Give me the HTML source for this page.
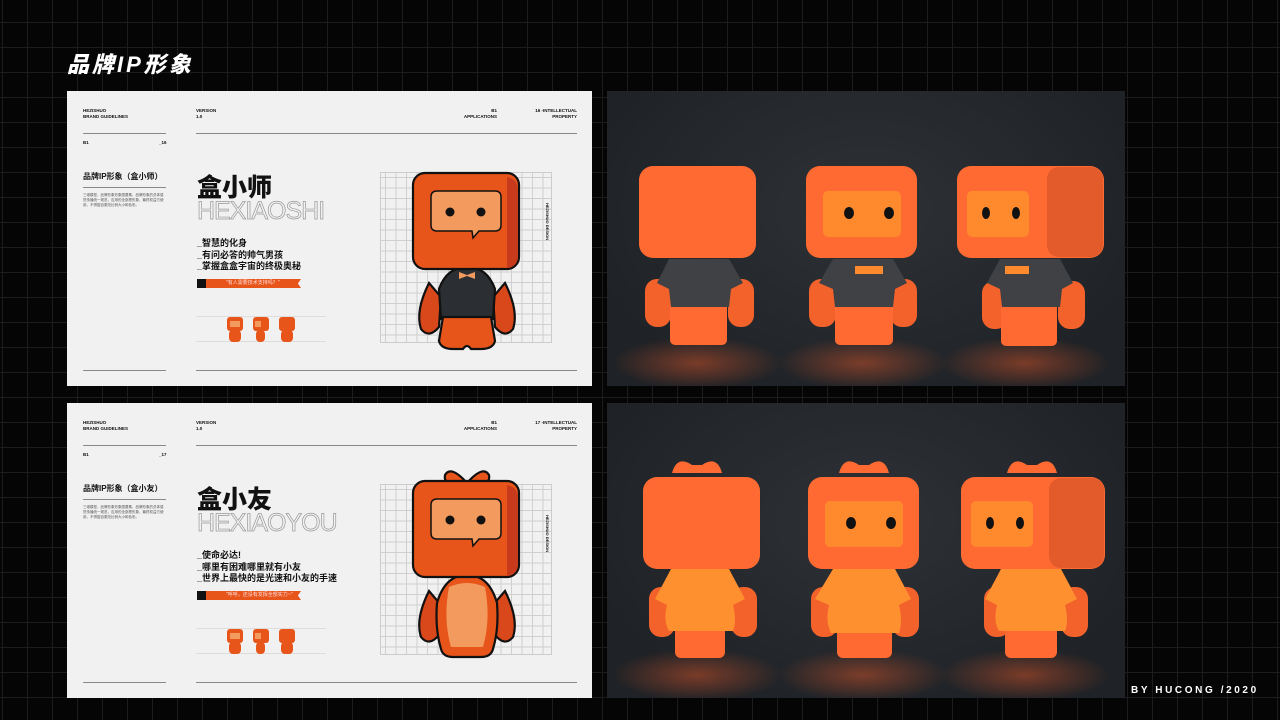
<!DOCTYPE html>
<html><head><meta charset="utf-8"><style>
*{margin:0;padding:0;box-sizing:border-box}
body{width:1280px;height:720px;overflow:hidden;background:#050505;position:relative;font-family:"Liberation Sans","Noto Sans CJK SC",sans-serif;
background-image:linear-gradient(#1c1c1c 1px,transparent 1px),linear-gradient(90deg,#1c1c1c 1px,transparent 1px);background-size:25px 25px;background-position:2px 22px}
.t{position:absolute;left:67px;top:47px;color:#fff;font-size:22px;font-weight:900;font-style:italic;letter-spacing:3px}
.p{position:absolute;left:67px;width:525px;height:295px;background:#f1f1f1;color:#111}
.d{position:absolute;left:607px;width:518px;height:295px;background:radial-gradient(ellipse at 50% 40%,#2e3236,#1f2226 80%)}
.s{position:absolute;font-size:4.5px;font-weight:700;line-height:6px}
.ln{position:absolute;height:1px;background:#888}
.by{position:absolute;left:1131px;top:685px;color:#fff;font-size:10px;font-weight:700;letter-spacing:2.6px}
.big{position:absolute;left:130px;font-size:25px;font-weight:900}
.en{position:absolute;left:130px;font-size:25px;color:transparent;-webkit-text-stroke:0.7px #999;letter-spacing:-1px}
.bl{position:absolute;left:130px;font-size:9px;line-height:11.5px;font-weight:600}
.tag{position:absolute;left:130px;width:104px;height:9px;background:#e8551a;border-left:9px solid #111;color:#fdd;font-size:5px;line-height:9px;padding-left:20px;clip-path:polygon(0 0,100% 0,97% 50%,100% 100%,0 100%)}
.sub{position:absolute;left:16px;font-size:8px;font-weight:600}
</style></head><body>
<div class="t">品牌IP形象</div>

<!-- panel 1 -->
<div class="p" style="top:91px">
 <div class="s" style="left:16px;top:17px">HEZISHUO<br>BRAND GUIDELINES</div>
 <div class="s" style="left:129px;top:17px">VERSION<br>1.0</div>
 <div class="s" style="left:390px;top:17px;text-align:right;width:40px">B1<br>APPLICATIONS</div>
 <div class="s" style="left:450px;top:17px;text-align:right;width:60px">16 -INTELLECTUAL<br>PROPERTY</div>
 <div class="ln" style="left:16px;top:42px;width:83px"></div>
 <div class="ln" style="left:129px;top:42px;width:381px"></div>
 <div class="s" style="left:16px;top:49px">B1</div><div class="s" style="left:92px;top:49px">_16</div>
 <div class="sub" style="top:80px">品牌IP形象（盒小师）</div>
 <div class="ln" style="left:16px;top:96px;width:83px"></div>
 <div class="s" style="left:16px;top:102px;font-size:3.5px;line-height:5px;width:83px;font-weight:400;color:#555">三维模型，品牌形象形象图要素，品牌形象的总体感觉传播统一规范，应用的全部是形象，最终权益方使用，不得擅自更改比例大小和色彩。</div>
 <div class="big" style="top:77px">盒小师</div>
 <div class="en" style="top:106px">HEXIAOSHI</div>
 <div class="bl" style="top:147px">_智慧的化身<br>_有问必答的帅气男孩<br>_掌握盒盒宇宙的终极奥秘</div>
 <div class="tag" style="top:188px">"有人需要技术支持吗？"</div>
 <div class="ln" style="left:129px;top:225px;width:130px;background:#ddd"></div>
 <div class="ln" style="left:129px;top:250px;width:130px;background:#ddd"></div>
 <svg style="position:absolute;left:158px;top:222px" width="75" height="32">
  <g fill="#e8551a"><rect x="2" y="4" width="16" height="14" rx="3"/><rect x="4" y="17" width="12" height="12" rx="4"/><rect x="28" y="4" width="16" height="14" rx="3"/><rect x="31" y="17" width="9" height="12" rx="4"/><rect x="54" y="4" width="16" height="14" rx="3"/><rect x="56" y="17" width="12" height="12" rx="4"/></g>
  <g fill="#f39a5e"><rect x="5" y="8" width="10" height="6"/><rect x="30" y="8" width="6" height="6"/></g>
 </svg>
 <div style="position:absolute;left:313px;top:81px;width:172px;height:171px;border:1px solid #ccc;background-image:linear-gradient(#d0d0d0 1px,transparent 1px),linear-gradient(90deg,#d0d0d0 1px,transparent 1px);background-size:10.5px 10.5px;background-position:4px 4px"></div>
 <div style="position:absolute;left:478px;top:112px;font-size:4px;font-weight:700;writing-mode:vertical-rl">HEZISHUO DESIGN</div>
 <svg style="position:absolute;left:340px;top:80px" width="120" height="180" viewBox="0 0 120 180">
  <g stroke="#111" stroke-width="2.2">
   <path d="M22 112 Q8 140 14 158 Q22 168 32 156 L34 126Z" fill="#d9481a"/>
   <path d="M98 112 Q112 140 106 158 Q98 168 88 156 L86 126Z" fill="#d9481a"/>
   <path d="M32 118 Q40 96 60 96 Q80 96 88 118 L86 148 L34 148Z" fill="#2b2e32"/>
   <path d="M36 146 L84 146 L88 170 Q86 178 74 178 L64 178 Q60 172 56 178 L46 178 Q34 178 32 170Z" fill="#e8551a"/>
   <rect x="6" y="2" width="106" height="96" rx="12" fill="#e8551a"/>
   <path d="M24 26 Q24 20 30 20 L88 20 Q94 20 94 26 L94 54 Q94 60 88 60 L72 60 L66 67 L65 60 L30 60 Q24 60 24 54Z" fill="#f39a5e" stroke-width="1.5"/>
  </g>
  <path d="M100 6 Q111 8 111 20 L111 86 Q110 96 100 97Z" fill="#c83a1c"/>
  <circle cx="43" cy="41" r="4.5" fill="#111"/><circle cx="74" cy="41" r="4.5" fill="#111"/>
  <path d="M52 101 L60 104 L68 101 L68 108 L60 105 L52 108Z" fill="#f39a5e"/>
 </svg>
 <div class="ln" style="left:16px;top:279px;width:83px"></div>
 <div class="ln" style="left:129px;top:279px;width:381px"></div>
</div>

<!-- panel 2 -->
<div class="p" style="top:403px">
 <div class="s" style="left:16px;top:17px">HEZISHUO<br>BRAND GUIDELINES</div>
 <div class="s" style="left:129px;top:17px">VERSION<br>1.0</div>
 <div class="s" style="left:390px;top:17px;text-align:right;width:40px">B1<br>APPLICATIONS</div>
 <div class="s" style="left:450px;top:17px;text-align:right;width:60px">17 -INTELLECTUAL<br>PROPERTY</div>
 <div class="ln" style="left:16px;top:42px;width:83px"></div>
 <div class="ln" style="left:129px;top:42px;width:381px"></div>
 <div class="s" style="left:16px;top:49px">B1</div><div class="s" style="left:92px;top:49px">_17</div>
 <div class="sub" style="top:80px">品牌IP形象（盒小友）</div>
 <div class="ln" style="left:16px;top:96px;width:83px"></div>
 <div class="s" style="left:16px;top:102px;font-size:3.5px;line-height:5px;width:83px;font-weight:400;color:#555">三维模型，品牌形象形象图要素，品牌形象的总体感觉传播统一规范，应用的全部是形象，最终权益方使用，不得擅自更改比例大小和色彩。</div>
 <div class="big" style="top:77px">盒小友</div>
 <div class="en" style="top:106px">HEXIAOYOU</div>
 <div class="bl" style="top:147px">_使命必达!<br>_哪里有困难哪里就有小友<br>_世界上最快的是光速和小友的手速</div>
 <div class="tag" style="top:188px">"呼呼，还没有发挥全部实力~"</div>
 <div class="ln" style="left:129px;top:225px;width:130px;background:#ddd"></div>
 <div class="ln" style="left:129px;top:250px;width:130px;background:#ddd"></div>
 <svg style="position:absolute;left:158px;top:222px" width="75" height="32">
  <g fill="#e8551a"><rect x="2" y="4" width="16" height="14" rx="3"/><rect x="4" y="17" width="12" height="12" rx="4"/><rect x="28" y="4" width="16" height="14" rx="3"/><rect x="31" y="17" width="9" height="12" rx="4"/><rect x="54" y="4" width="16" height="14" rx="3"/><rect x="56" y="17" width="12" height="12" rx="4"/></g>
  <g fill="#f39a5e"><rect x="5" y="8" width="10" height="6"/><rect x="30" y="8" width="6" height="6"/></g>
 </svg>
 <div style="position:absolute;left:313px;top:81px;width:172px;height:171px;border:1px solid #ccc;background-image:linear-gradient(#d0d0d0 1px,transparent 1px),linear-gradient(90deg,#d0d0d0 1px,transparent 1px);background-size:10.5px 10.5px;background-position:4px 4px"></div>
 <div style="position:absolute;left:478px;top:112px;font-size:4px;font-weight:700;writing-mode:vertical-rl">HEZISHUO DESIGN</div>
 <svg style="position:absolute;left:340px;top:60px" width="120" height="196" viewBox="0 -16 120 196">
  <g stroke="#111" stroke-width="2.2">
   <path d="M60 4 Q44 -14 38 -4 Q36 6 52 6Z M60 4 Q76 -14 82 -4 Q84 6 68 6Z" fill="#e8551a"/>
   <path d="M22 112 Q8 140 14 158 Q22 168 32 156 L34 126Z" fill="#d9481a"/>
   <path d="M98 112 Q112 140 106 158 Q98 168 88 156 L86 126Z" fill="#d9481a"/>
   <path d="M30 124 Q38 96 60 96 Q82 96 90 124 Q92 150 86 170 Q84 178 74 178 L46 178 Q36 178 34 170 Q28 150 30 124Z" fill="#e8551a"/>
   <rect x="6" y="2" width="106" height="96" rx="12" fill="#e8551a"/>
   <path d="M24 26 Q24 20 30 20 L88 20 Q94 20 94 26 L94 54 Q94 60 88 60 L72 60 L66 67 L65 60 L30 60 Q24 60 24 54Z" fill="#f39a5e" stroke-width="1.5"/>
  </g>
  <path d="M42 108 Q60 100 78 108 Q84 140 76 168 L44 168 Q36 140 42 108Z" fill="#f39a5e"/>
  <path d="M100 6 Q111 8 111 20 L111 86 Q110 96 100 97Z" fill="#c83a1c"/>
  <circle cx="43" cy="41" r="4.5" fill="#111"/><circle cx="74" cy="41" r="4.5" fill="#111"/>
 </svg>
 <div class="ln" style="left:16px;top:279px;width:83px"></div>
 <div class="ln" style="left:129px;top:279px;width:381px"></div>
</div>

<!-- 3D panels -->
<div class="d" style="top:91px">
 <svg width="518" height="295">
  <defs><radialGradient id="gl" cx="50%" cy="50%" r="50%"><stop offset="0" stop-color="#c4502a" stop-opacity=".55"/><stop offset="1" stop-color="#c4502a" stop-opacity="0"/></radialGradient></defs>
  <ellipse cx="90" cy="272" rx="85" ry="26" fill="url(#gl)"/><ellipse cx="256" cy="272" rx="85" ry="26" fill="url(#gl)"/><ellipse cx="418" cy="272" rx="85" ry="26" fill="url(#gl)"/>
  <g fill="#f4622c">
   <rect x="38" y="188" width="26" height="48" rx="12"/><rect x="121" y="188" width="26" height="48" rx="12"/>
   <rect x="202" y="188" width="27" height="48" rx="12"/><rect x="283" y="188" width="27" height="48" rx="12"/>
   <rect x="375" y="190" width="26" height="48" rx="12"/><rect x="451" y="190" width="27" height="48" rx="12"/>
  </g>
  <g fill="#ff6a33">
   <rect x="63" y="205" width="57" height="49" rx="5"/>
   <rect x="228" y="205" width="58" height="49" rx="5"/>
   <rect x="394" y="205" width="56" height="50" rx="5"/>
  </g>
  <g fill="#3f4144">
   <path d="M62 168 L122 168 L136 192 L124 198 L122 216 L64 216 L62 198 L50 192Z"/>
   <path d="M226 168 L286 168 L300 192 L288 198 L286 216 L228 216 L226 198 L212 192Z"/>
   <path d="M393 168 L453 168 L466 192 L455 198 L453 216 L395 216 L393 198 L380 192Z"/>
  </g>
  <g fill="#ff6a33">
   <rect x="32" y="75" width="117" height="92" rx="14"/>
   <rect x="199" y="75" width="111" height="92" rx="14"/>
   <rect x="350" y="75" width="147" height="92" rx="14"/>
  </g>
  <rect x="440" y="76" width="56" height="90" rx="12" fill="#e35a2b"/>
  <g fill="#ff8a2e"><rect x="216" y="100" width="78" height="46" rx="5"/><rect x="360" y="100" width="62" height="46" rx="5"/></g>
  <g fill="#ff8a2e"><rect x="248" y="175" width="28" height="8"/><rect x="398" y="175" width="24" height="8"/></g>
  <g fill="#111"><ellipse cx="242" cy="122" rx="5" ry="6"/><ellipse cx="282" cy="122" rx="5" ry="6"/><ellipse cx="379" cy="122" rx="4" ry="6"/><ellipse cx="409" cy="122" rx="4" ry="6"/></g>
 </svg>
</div>
<div class="d" style="top:403px">
 <svg width="518" height="295">
  <ellipse cx="90" cy="272" rx="85" ry="26" fill="url(#gl)"/><ellipse cx="256" cy="272" rx="85" ry="26" fill="url(#gl)"/><ellipse cx="418" cy="272" rx="85" ry="26" fill="url(#gl)"/>
  <g fill="#f4622c">
   <rect x="42" y="184" width="26" height="50" rx="12"/><rect x="124" y="184" width="26" height="50" rx="12"/>
   <rect x="204" y="184" width="27" height="50" rx="12"/><rect x="285" y="184" width="27" height="50" rx="12"/>
   <rect x="377" y="184" width="26" height="50" rx="12"/><rect x="454" y="184" width="27" height="50" rx="12"/>
  </g>
  <g fill="#ff6a33">
   <path d="M65 70 Q70 52 85 62 L95 62 Q110 52 115 70Z"/><path d="M232 70 Q237 52 252 62 L262 62 Q277 52 282 70Z"/><path d="M400 70 Q405 52 420 62 L430 62 Q445 52 450 70Z"/>
   <rect x="68" y="210" width="50" height="45" rx="6"/>
   <rect x="230" y="210" width="55" height="45" rx="6"/>
   <rect x="398" y="210" width="52" height="45" rx="6"/>
  </g>
  <g fill="#ff9030">
   <path d="M64 166 L122 166 L138 196 L126 202 Q130 218 126 228 L62 228 Q56 218 60 202 L48 196Z"/>
   <path d="M226 166 L288 166 L304 196 L292 202 Q296 218 292 230 L224 230 Q218 218 222 202 L208 196Z"/>
   <path d="M394 166 L454 166 L470 196 L458 202 Q462 218 458 228 L392 228 Q386 218 390 202 L378 196Z"/>
  </g>
  <g fill="#ff6a33">
   <rect x="36" y="74" width="117" height="92" rx="14"/>
   <rect x="201" y="74" width="111" height="92" rx="14"/>
   <rect x="354" y="74" width="144" height="92" rx="14"/>
  </g>
  <rect x="442" y="75" width="55" height="90" rx="12" fill="#e35a2b"/>
  <g fill="#ff8a2e"><rect x="218" y="98" width="78" height="46" rx="5"/><rect x="364" y="98" width="62" height="46" rx="5"/></g>
  <g fill="#111"><ellipse cx="244" cy="120" rx="5" ry="6"/><ellipse cx="284" cy="120" rx="5" ry="6"/><ellipse cx="383" cy="120" rx="4" ry="6"/><ellipse cx="413" cy="120" rx="4" ry="6"/></g>
 </svg>
</div>
<div class="by">BY HUCONG /2020</div>
</body></html>
